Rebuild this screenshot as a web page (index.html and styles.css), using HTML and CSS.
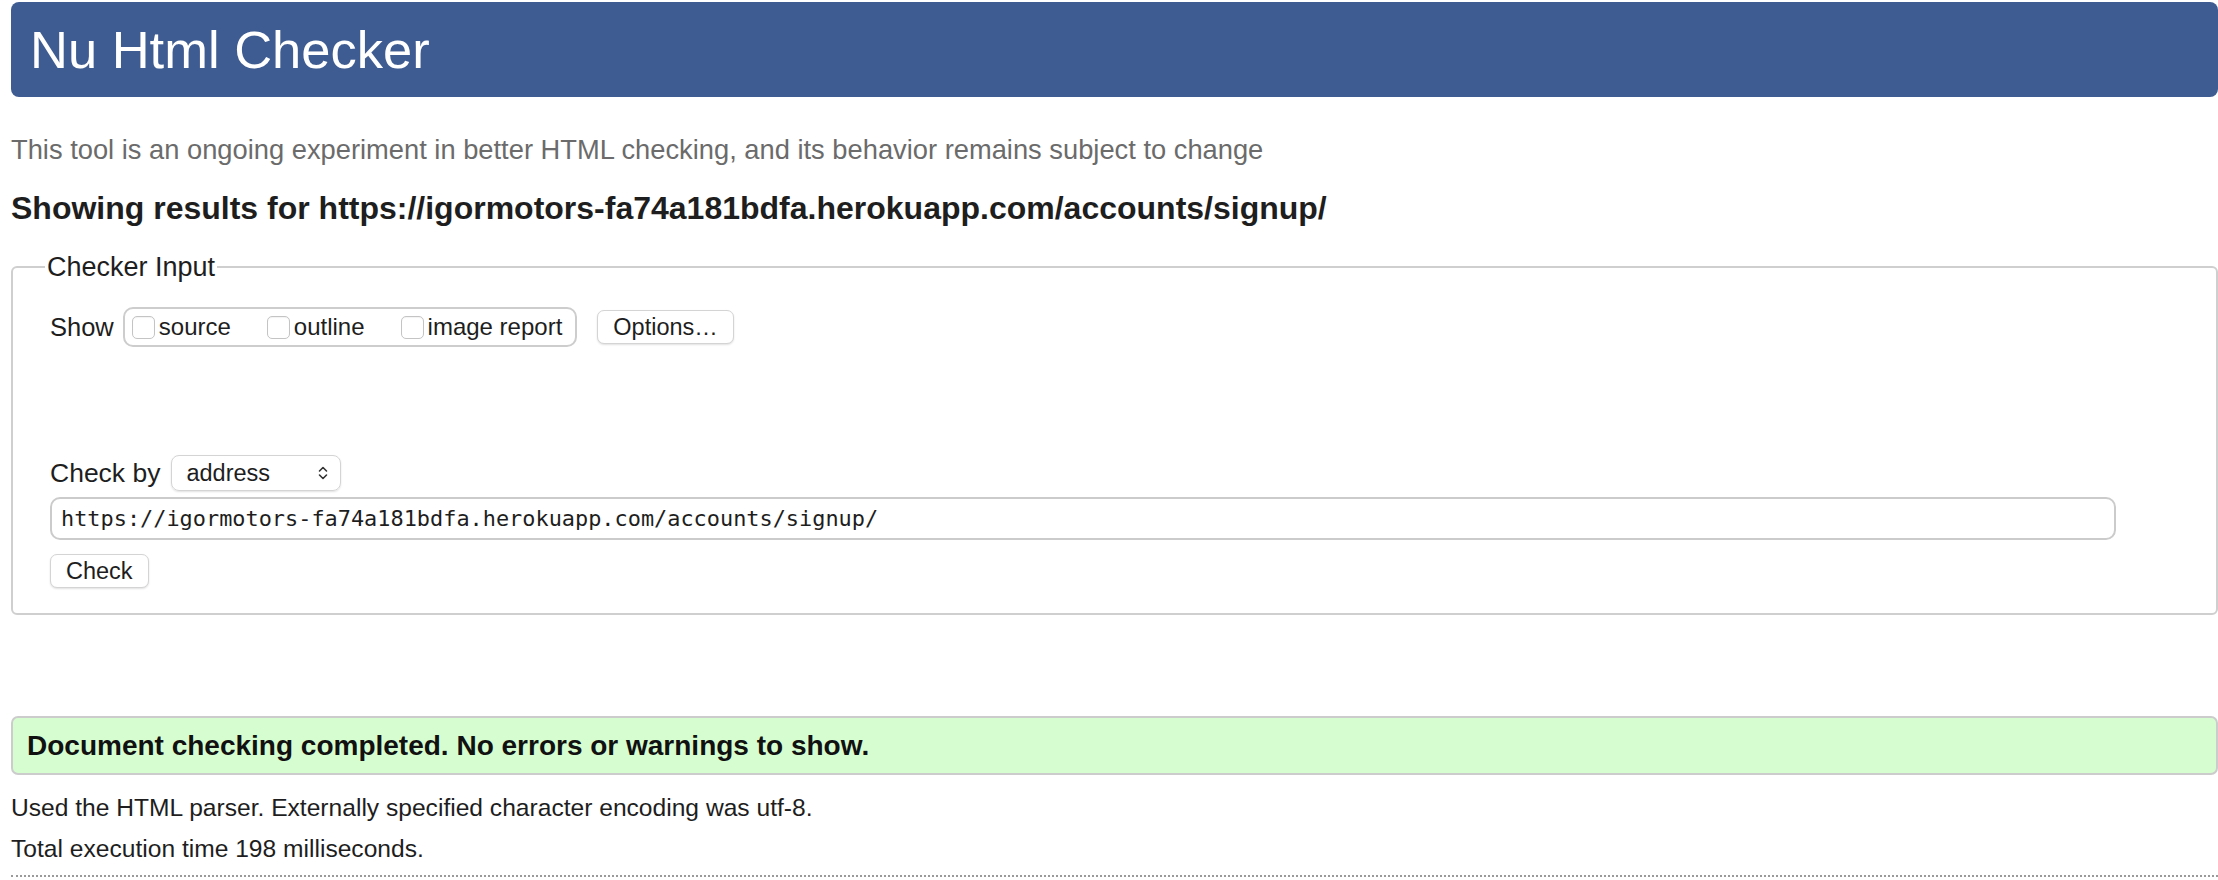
FILE: index.html
```html
<!DOCTYPE html>
<html lang="en">
<head>
<meta charset="utf-8">
<title>Nu Html Checker</title>
<link rel="stylesheet" href="styles.css">
</head>
<body>
<h1 class="title">Nu Html Checker</h1>
<p class="intro">This tool is an ongoing experiment in better HTML checking, and its behavior remains subject to change</p>
<h2 class="results-heading">Showing results for https://igormotors-fa74a181bdfa.herokuapp.com/accounts/signup/</h2>
<fieldset class="checker">
  <legend class="checker-legend">Checker Input</legend>
  <div class="show-row">
    <span class="field-label">Show</span>
    <div class="show-group">
      <label class="opt"><span class="box"></span>source</label>
      <label class="opt"><span class="box"></span>outline</label>
      <label class="opt"><span class="box"></span>image report</label>
    </div>
    <span class="btn options-btn">Options…</span>
  </div>
  <div class="checkby-row">
    <span class="field-label field-label-wide">Check by</span>
    <div class="select">
      <span>address</span>
      <svg class="chev" width="12" height="18" viewBox="0 0 12 18" aria-hidden="true">
        <path d="M2.5 7 L6 3.5 L9.5 7" fill="none" stroke="#333" stroke-width="1.6" stroke-linecap="round" stroke-linejoin="round"/>
        <path d="M2.5 11 L6 14.5 L9.5 11" fill="none" stroke="#333" stroke-width="1.6" stroke-linecap="round" stroke-linejoin="round"/>
      </svg>
    </div>
  </div>
  <div class="url-input">https://igormotors-fa74a181bdfa.herokuapp.com/accounts/signup/</div>
  <span class="btn check-btn">Check</span>
</fieldset>
<div class="success">Document checking completed. No errors or warnings to show.</div>
<p class="info info-first">Used the HTML parser. Externally specified character encoding was utf-8.</p>
<p class="info info-second">Total execution time 198 milliseconds.</p>
<div class="dotted-rule"></div>
</body>
</html>
```

FILE: styles.css
```css
html, body {
  margin: 0;
  padding: 0;
  background: #fff;
}
body {
  padding: 2px 0 0 11px;
  font-family: "Liberation Sans", Arial, Helvetica, sans-serif;
  color: #1e1e1e;
  overflow: hidden;
}
.title {
  margin: 0;
  height: 95px;
  display: flex;
  align-items: center;
  padding-left: 19px;
  background: #3e5c91;
  color: #fff;
  font-weight: normal;
  font-size: 52.5px;
  border-radius: 8px;
  box-sizing: border-box;
}
.intro {
  margin: 37px 0 0 0;
  font-size: 27.3px;
  line-height: 32px;
  color: #6b6b6b;
}
.results-heading {
  margin: 23px 0 0 0;
  font-size: 32px;
  line-height: 38px;
  font-weight: bold;
  color: #1e1e1e;
}
.checker {
  margin: 24px 0 0 0;
  padding: 0 37px 25px 37px;
  border: 2px solid #cfcfcf;
  border-radius: 6px;
  min-width: 0;
}
.checker-legend {
  margin-left: -5px;
  padding: 0 2px;
  font-size: 27px;
  line-height: 32px;
  color: #1e1e1e;
}
.show-row {
  margin-top: 24px;
  display: flex;
  align-items: center;
  height: 40px;
}
.field-label {
  font-size: 25.5px;
  line-height: 30px;
  color: #1e1e1e;
}
.field-label-wide {
  font-size: 26.5px;
}
.show-group {
  margin-left: 9px;
  height: 40px;
  box-sizing: border-box;
  border: 2px solid #cdcdcd;
  border-radius: 10px;
  display: flex;
  align-items: center;
  padding: 0 13px 0 7px;
  gap: 36px;
}
.opt {
  display: flex;
  align-items: center;
  font-size: 24px;
  color: #1e1e1e;
}
.box {
  width: 23px;
  height: 23px;
  border: 1.5px solid #c4c4c4;
  border-radius: 5px;
  margin-right: 4px;
  background: #fff;
  box-sizing: border-box;
  box-shadow: inset 0 1px 1px rgba(0,0,0,0.05);
}
.btn {
  display: inline-flex;
  align-items: center;
  box-sizing: border-box;
  border: 1.5px solid #d4d4d4;
  border-radius: 7px;
  background: #fff;
  box-shadow: 0 1px 2px rgba(0,0,0,0.12);
  font-size: 23.5px;
  color: #1e1e1e;
}
.options-btn {
  margin-left: 20px;
  height: 34px;
  padding: 0 15px;
}
.checkby-row {
  margin-top: 108px;
  display: flex;
  align-items: center;
  height: 36px;
}
.select {
  margin-left: 11px;
  width: 170px;
  height: 36px;
  box-sizing: border-box;
  border: 1.5px solid #d4d4d4;
  border-radius: 8px;
  box-shadow: 0 1px 2px rgba(0,0,0,0.12);
  display: flex;
  align-items: center;
  justify-content: space-between;
  padding: 0 11px 0 14px;
  font-size: 23.5px;
  color: #1e1e1e;
}
.chev {
  display: block;
}
.url-input {
  margin-top: 6px;
  width: 2066px;
  height: 43px;
  box-sizing: border-box;
  border: 2px solid #cbcbcb;
  border-radius: 10px;
  display: flex;
  align-items: center;
  padding-left: 9px;
  font-family: "DejaVu Sans Mono", "Liberation Mono", monospace;
  font-size: 21.9px;
  color: #1e1e1e;
}
.check-btn {
  margin-top: 14px;
  height: 34px;
  padding: 0 15px;
}
.success {
  margin-top: 101px;
  height: 59px;
  box-sizing: border-box;
  border: 2px solid #cccccc;
  border-radius: 7px;
  background: #d6fdd0;
  display: flex;
  align-items: center;
  padding-left: 14px;
  font-size: 28px;
  font-weight: bold;
  color: #111;
}
.info {
  margin: 0;
  font-size: 24.6px;
  line-height: 30px;
  color: #1e1e1e;
}
.info-first {
  margin-top: 18px;
}
.info-second {
  margin-top: 11px;
}
.dotted-rule {
  margin-top: 11px;
  border-top: 2px dotted #9a9a9a;
}
```
